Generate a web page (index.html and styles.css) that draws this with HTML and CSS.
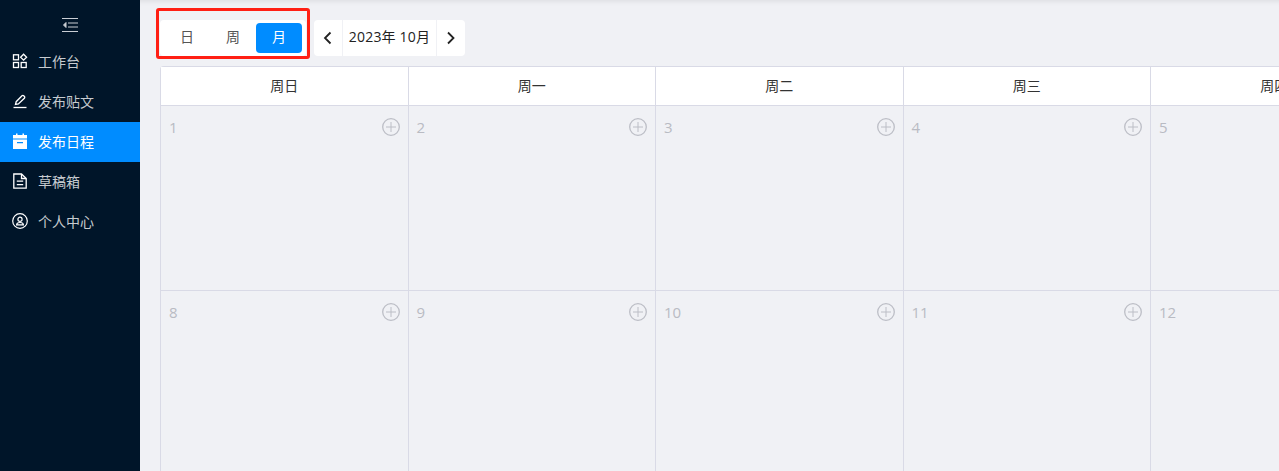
FILE: index.html
```html
<!DOCTYPE html>
<html lang="zh-CN">
<head>
    <meta charset="UTF-8">
    <title>发布日程</title>
    <link rel="stylesheet" href="styles.css">
</head>
<body>
    <svg class="defs" width="0" height="0">
        <symbol id="plus-circle" viewBox="0 0 18 18">
            <circle cx="9" cy="9" r="8.300" fill="none" stroke="currentColor" stroke-width="1.300"/>
            <path d="M4 9h10M9 4v10" fill="none" stroke="currentColor" stroke-width="1"/>
        </symbol>
    </svg>
    <div class="layout">
        <aside class="sidebar">
            <div class="collapse-btn">
                <svg width="16" height="14" viewBox="0 0 16 14" fill="none" stroke="#c9ced4" stroke-width="1"><path d="M0 .5h16M6 5h10M6 9h10M0 13.500h16"/><path d="M4 4.500L1.500 7 4 9.500z" fill="#c9ced4"/></svg>
            </div>
            <nav class="menu">
                <a class="menu-item">
                    <svg class="menu-icon" viewBox="0 0 16 16" fill="none" stroke="#fff" stroke-width="1.300"><rect x="1.500" y="1.800" width="5" height="5"/><path d="M11.600 1.200l3 3-3 3-3-3z"/><rect x="1.500" y="9.500" width="5" height="5"/><rect x="9.200" y="9.500" width="5" height="5"/></svg>
                    工作台
                </a>
                <a class="menu-item">
                    <svg class="menu-icon" viewBox="0 0 16 16" fill="none" stroke="#fff" stroke-width="1.300"><path d="M3.500 11.500l.7-2.800L10 2.800a1.200 1.200 0 0 1 1.700 0l.7.7a1.200 1.200 0 0 1 0 1.700L6.400 11z"/><path d="M1.500 14.500h13"/></svg>
                    发布贴文
                </a>
                <a class="menu-item active">
                    <svg class="menu-icon" viewBox="0 0 16 16"><path fill="#fff" d="M4 .5h1.500V2h5V.5H12V2h3v3.500H1V2h3zM1 6.500h14V16H1zM5 9v1.300h6V9z"/></svg>
                    发布日程
                </a>
                <a class="menu-item">
                    <svg class="menu-icon" viewBox="0 0 16 16" fill="none" stroke="#fff" stroke-width="1.300"><path d="M1.800 1h7.700l4.700 4.500V15.200H1.800z"/><path d="M9.500 1v4.500h4.700M4.800 8.200h6.400M4.800 11.700h6.400"/></svg>
                    草稿箱
                </a>
                <a class="menu-item">
                    <svg class="menu-icon" viewBox="0 0 16 16" fill="none" stroke="#fff" stroke-width="1.200"><circle cx="8" cy="8" r="7.300"/><circle cx="8" cy="6.300" r="2.100"/><path d="M4.600 11.800c0-1.500 1.400-2.300 3.400-2.300s3.400.8 3.400 2.300z"/></svg>
                    个人中心
                </a>
            </nav>
        </aside>

        <main class="content">
            <div class="toolbar">
                <div class="view-switch">
                    <span class="view-btn">日</span>
                    <span class="view-btn">周</span>
                    <span class="view-btn selected">月</span>
                </div>
                <div class="date-nav">
                    <span class="nav-btn">
                        <svg width="10" height="14" viewBox="0 0 10 14" fill="none" stroke="#222" stroke-width="1.800"><path d="M7.500 1.500L2 7l5.500 5.500"/></svg>
                    </span>
                    <span class="date-label">2023年 10月</span>
                    <span class="nav-btn">
                        <svg width="10" height="14" viewBox="0 0 10 14" fill="none" stroke="#222" stroke-width="1.800"><path d="M2 1.500L7.500 7 2 12.500"/></svg>
                    </span>
                </div>
                <div class="highlight-box"></div>
            </div>

            <div class="calendar">
                <div class="cal-head">周日</div>
                <div class="cal-head">周一</div>
                <div class="cal-head">周二</div>
                <div class="cal-head">周三</div>
                <div class="cal-head">周四</div>

                <div class="cal-cell"><span>1</span><svg class="add-btn"><use href="#plus-circle"/></svg></div>
                <div class="cal-cell"><span>2</span><svg class="add-btn"><use href="#plus-circle"/></svg></div>
                <div class="cal-cell"><span>3</span><svg class="add-btn"><use href="#plus-circle"/></svg></div>
                <div class="cal-cell"><span>4</span><svg class="add-btn"><use href="#plus-circle"/></svg></div>
                <div class="cal-cell"><span>5</span><svg class="add-btn"><use href="#plus-circle"/></svg></div>

                <div class="cal-cell"><span>8</span><svg class="add-btn"><use href="#plus-circle"/></svg></div>
                <div class="cal-cell"><span>9</span><svg class="add-btn"><use href="#plus-circle"/></svg></div>
                <div class="cal-cell"><span>10</span><svg class="add-btn"><use href="#plus-circle"/></svg></div>
                <div class="cal-cell"><span>11</span><svg class="add-btn"><use href="#plus-circle"/></svg></div>
                <div class="cal-cell"><span>12</span><svg class="add-btn"><use href="#plus-circle"/></svg></div>
            </div>
        </main>
    </div>
</body>
</html>
```

FILE: styles.css
```css
* {
    margin: 0;
    padding: 0;
    box-sizing: border-box;
}

html, body {
    height: 100%;
    overflow: hidden;
}

body {
    font-family: "Open Sans", "Noto Sans CJK SC", sans-serif;
    font-size: 14px;
    color: #222;
    background-color: #f0f1f5;
}

.defs {
    position: absolute;
}

.layout {
    display: flex;
    height: 100%;
}

/* Sidebar */
.sidebar {
    flex: 0 0 140px;
    background-color: #001529;
}

.collapse-btn {
    height: 42px;
    padding-top: 18px;
    display: flex;
    justify-content: center;
}

.collapse-btn svg {
    display: block;
}

.menu-item {
    display: flex;
    align-items: center;
    height: 40px;
    padding: 0 0 2px 12px;
    color: rgba(255, 255, 255, 0.78);
}

.menu-item.active {
    background-color: #008cff;
    color: #fff;
}

.menu-icon {
    width: 16px;
    height: 16px;
    margin-right: 10px;
    flex: none;
}

/* Main area */
.content {
    flex: 1;
    min-width: 0;
    padding: 20px 0 0 20px;
    overflow: hidden;
    box-shadow: inset 0 6px 6px -6px rgba(0, 0, 0, 0.12);
}

.toolbar {
    position: relative;
    display: flex;
    gap: 8px;
    height: 36px;
    margin-bottom: 10px;
}

.view-switch {
    display: flex;
    align-items: center;
    width: 146px;
    padding: 0 4px;
    background-color: #fff;
    border-radius: 4px;
}

.view-btn {
    width: 46px;
    height: 30px;
    line-height: 28px;
    text-align: center;
    color: #555;
    border-radius: 4px;
}

.view-btn.selected {
    background-color: #008cff;
    color: #fff;
}

.date-nav {
    display: flex;
    align-items: stretch;
    background-color: #fff;
    border-radius: 4px;
}

.nav-btn {
    width: 28px;
    display: flex;
    align-items: center;
    justify-content: center;
}

.date-label {
    width: 95px;
    line-height: 34px;
    text-align: center;
    white-space: nowrap;
    letter-spacing: 0.2px;
    border-left: 1px solid #f0f1f5;
    border-right: 1px solid #f0f1f5;
}

.highlight-box {
    position: absolute;
    left: -4px;
    top: -12px;
    width: 154px;
    height: 51px;
    border: 3px solid #ff1f14;
    border-radius: 3px;
}

/* Calendar */
.calendar {
    display: grid;
    grid-template-columns: repeat(5, 247.500px);
    grid-template-rows: 39px 185px 185px;
    border-top: 1px solid #d9dae6;
    border-left: 1px solid #d9dae6;
    border-top-left-radius: 4px;
}

.cal-head {
    background-color: #fff;
    text-align: center;
    line-height: 37px;
    color: #333;
    border-right: 1px solid #d9dae6;
    border-bottom: 1px solid #d9dae6;
}

.cal-cell {
    position: relative;
    padding: 11px 8px;
    color: #b9bbc3;
    font-size: 15px;
    line-height: 20px;
    border-right: 1px solid #d9dae6;
    border-bottom: 1px solid #d9dae6;
}

.add-btn {
    position: absolute;
    top: 12px;
    right: 8px;
    width: 18px;
    height: 18px;
    color: #bcbec6;
}
```
